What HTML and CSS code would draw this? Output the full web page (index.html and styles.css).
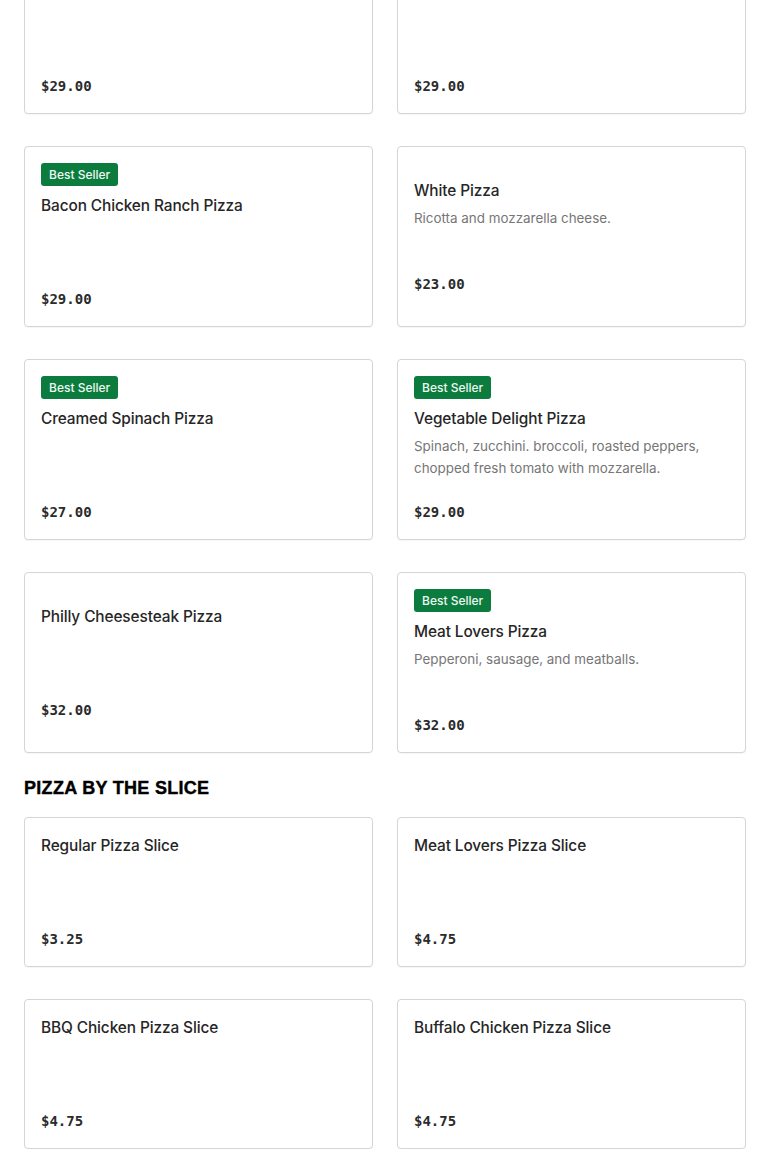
FILE: index.html
```html
<!DOCTYPE html>
<html lang="en">
<head>
<meta charset="utf-8">
<title>Menu</title>
<link rel="stylesheet" href="styles.css">
</head>
<body>
<main class="menu">
  <section class="section">
    <div class="grid">
      <div class="card">
        <div class="title">Buffalo Chicken Pizza</div>
        <div class="desc"></div>
        <div class="price">$29.00</div>
      </div>
      <div class="card">
        <div class="title">BBQ Chicken Pizza with Bacon</div>
        <div class="desc"></div>
        <div class="price">$29.00</div>
      </div>
      <div class="card">
        <span class="badge">Best Seller</span>
        <div class="title">Bacon Chicken Ranch Pizza</div>
        <div class="desc"></div>
        <div class="price">$29.00</div>
      </div>
      <div class="card">
        <div class="title">White Pizza</div>
        <div class="desc">Ricotta and mozzarella cheese.</div>
        <div class="price">$23.00</div>
      </div>
      <div class="card">
        <span class="badge">Best Seller</span>
        <div class="title">Creamed Spinach Pizza</div>
        <div class="desc"></div>
        <div class="price">$27.00</div>
      </div>
      <div class="card">
        <span class="badge">Best Seller</span>
        <div class="title">Vegetable Delight Pizza</div>
        <div class="desc">Spinach, zucchini. broccoli, roasted peppers, chopped fresh tomato with mozzarella.</div>
        <div class="price">$29.00</div>
      </div>
      <div class="card">
        <div class="title">Philly Cheesesteak Pizza</div>
        <div class="desc"></div>
        <div class="price">$32.00</div>
      </div>
      <div class="card">
        <span class="badge">Best Seller</span>
        <div class="title">Meat Lovers Pizza</div>
        <div class="desc">Pepperoni, sausage, and meatballs.</div>
        <div class="price">$32.00</div>
      </div>
    </div>
  </section>
  <section class="section">
    <h2 class="heading">PIZZA BY THE SLICE</h2>
    <div class="grid">
      <div class="card">
        <div class="title">Regular Pizza Slice</div>
        <div class="desc"></div>
        <div class="price">$3.25</div>
      </div>
      <div class="card">
        <div class="title">Meat Lovers Pizza Slice</div>
        <div class="desc"></div>
        <div class="price">$4.75</div>
      </div>
      <div class="card">
        <div class="title">BBQ Chicken Pizza Slice</div>
        <div class="desc"></div>
        <div class="price">$4.75</div>
      </div>
      <div class="card">
        <div class="title">Buffalo Chicken Pizza Slice</div>
        <div class="desc"></div>
        <div class="price">$4.75</div>
      </div>
    </div>
  </section>
</main>
</body>
</html>
```

FILE: styles.css
```css
html, body {
  margin: 0;
  padding: 0;
  background: #ffffff;
}

body {
  font-family: Inter, "Noto Sans", sans-serif;
  color: #2b2b2b;
}

.menu {
  margin-top: -36px;
  padding: 0 24px;
}

.grid {
  display: grid;
  grid-template-columns: 1fr 1fr;
  column-gap: 24px;
  row-gap: 32px;
}

.card {
  display: flex;
  flex-direction: column;
  justify-content: center;
  padding: 16px;
  border: 1px solid #d5d5d5;
  border-radius: 4px;
  box-shadow: 0 1px 1px rgba(0, 0, 0, 0.04);
  background: #fff;
}

.badge {
  align-self: flex-start;
  height: 23px;
  line-height: 23px;
  padding: 0 8px;
  margin-bottom: 8px;
  background: #0b7c3e;
  color: #eef9f2;
  font-size: 12px;
  font-weight: 500;
  border-radius: 3px;
}

.title {
  font-size: 15.4px;
  line-height: 24px;
  font-weight: 500;
  color: #262626;
  letter-spacing: -0.1px;
}

.desc {
  margin-top: 4px;
  min-height: 44px;
  font-size: 13.4px;
  line-height: 22px;
  color: #767676;
}

.price {
  margin-top: 22px;
  font-family: "DejaVu Sans Mono", "Liberation Mono", monospace;
  font-size: 14px;
  line-height: 22px;
  font-weight: 700;
  color: #2b2b2b;
}

.heading {
  margin: 24px 0 18px;
  font-family: "Liberation Sans", Arial, sans-serif;
  font-size: 18px;
  line-height: 22px;
  font-weight: 700;
  letter-spacing: 0.3px;
  color: #000;
  -webkit-text-stroke: 0.4px #000;
}
```
